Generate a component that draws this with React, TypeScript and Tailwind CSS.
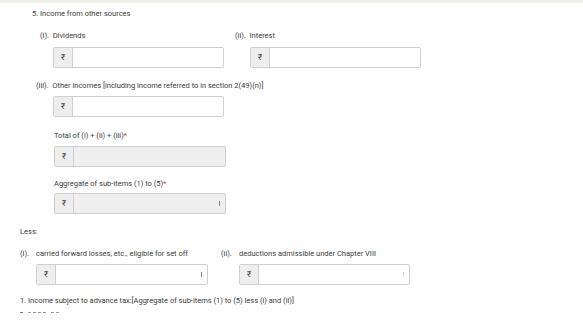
import React from 'react'

type FieldProps = {
  width: string
  disabled?: boolean
  caret?: 'dark' | 'light'
}

function RupeeField({ width, disabled = false, caret }: FieldProps) {
  return (
    <div
      className={`flex h-[21px] ${width} overflow-hidden rounded-[2px] border border-[#cfcfcf] ${
        disabled ? 'bg-[#efefef]' : 'bg-white'
      }`}
    >
      <span className="flex w-[19px] shrink-0 items-center justify-center border-r border-[#cfcfcf] bg-[#eeeeee] text-[8px] text-[#444]">
        ₹
      </span>
      <span className="flex flex-1 items-center justify-end pr-[5px]">
        {caret && (
          <span
            className={`h-[5px] w-px ${caret === 'dark' ? 'bg-[#7a8596]' : 'bg-[#d8d8d8]'}`}
          />
        )}
      </span>
    </div>
  )
}

function Label({ children, className = '' }: { children: React.ReactNode; className?: string }) {
  return <p className={`h-[10px] leading-[10px] whitespace-nowrap ${className}`}>{children}</p>
}

export default function App() {
  return (
    <div
      className="relative h-[326px] w-[583px] overflow-hidden bg-white text-[7.5px] text-[#3a3a3a]"
      style={{ fontFamily: 'Roboto, "Noto Sans", sans-serif' }}
    >
      <div className="h-[3px] bg-[#eef1ea]" />

      <Label className="mt-[6px] pl-[32px]">5. Income from other sources</Label>

      <div className="mt-[12px] flex">
        <div className="w-[235px] pl-[40px]">
          <Label>
            (i).&nbsp; Dividends
          </Label>
          <div className="mt-[6px] pl-[13px]">
            <RupeeField width="w-[171px]" />
          </div>
        </div>
        <div>
          <Label>
            (ii).&nbsp; Interest
          </Label>
          <div className="mt-[6px] pl-[15px]">
            <RupeeField width="w-[171px]" />
          </div>
        </div>
      </div>

      <div className="mt-[13px] pl-[36px]">
        <Label>
          (iii).&nbsp; Other incomes [including income referred to in section 2(49)(n)]
        </Label>
        <div className="mt-[5px] pl-[17px]">
          <RupeeField width="w-[171px]" />
        </div>
      </div>

      <div className="mt-[14px] pl-[54px]">
        <Label>
          Total of (i) + (ii) + (iii)<span className="text-[#d33]">*</span>
        </Label>
        <div className="mt-[5px]">
          <RupeeField width="w-[172px]" disabled />
        </div>
      </div>

      <div className="mt-[12px] pl-[54px]">
        <Label>
          Aggregate of sub-items (1) to (5)<span className="text-[#d33]">*</span>
        </Label>
        <div className="mt-[4px]">
          <RupeeField width="w-[172px]" disabled caret="dark" />
        </div>
      </div>

      <Label className="mt-[13px] pl-[20px]">Less:</Label>

      <div className="mt-[12px] flex pl-[20px]">
        <div className="w-[201px]">
          <Label>
            <span className="inline-block w-[16px]">(i).</span>carried forward losses, etc., eligible for set off
          </Label>
          <div className="mt-[5px] pl-[16px]">
            <RupeeField width="w-[172px]" caret="dark" />
          </div>
        </div>
        <div>
          <Label>
            <span className="inline-block w-[18px]">(ii).</span>deductions admissible under Chapter VIII
          </Label>
          <div className="mt-[5px] pl-[18px]">
            <RupeeField width="w-[171px]" caret="light" />
          </div>
        </div>
      </div>

      <Label className="mt-[11px] pl-[20px]">
        1. Income subject to advance tax:[Aggregate of sub-items (1) to (5) less (i) and (ii)]
      </Label>

      {/* clipped amount row peeking in at the bottom */}
      <div className="mt-[6px] flex gap-[2px] pl-[20px]">
        <span className="h-px w-[3px] bg-[#777]" />
        <span className="ml-[3px] h-px w-[3px] bg-[#999]" />
        <span className="h-px w-[3px] bg-[#999]" />
        <span className="h-px w-[3px] bg-[#999]" />
        <span className="h-px w-[3px] bg-[#999]" />
        <span className="ml-[3px] h-px w-[3px] bg-[#999]" />
        <span className="h-px w-[3px] bg-[#999]" />
      </div>
    </div>
  )
}
